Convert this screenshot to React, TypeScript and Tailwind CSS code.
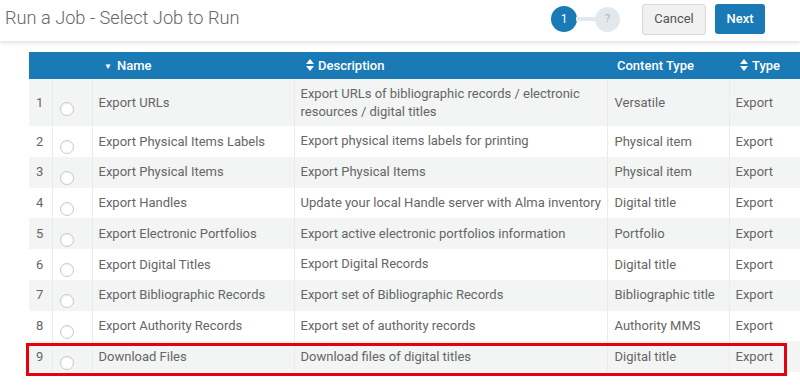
import React from "react";

const rows: [string, string, string][] = [
  ["Export URLs", "Export URLs of bibliographic records / electronic resources / digital titles", "Versatile"],
  ["Export Physical Items Labels", "Export physical items labels for printing", "Physical item"],
  ["Export Physical Items", "Export Physical Items", "Physical item"],
  ["Export Handles", "Update your local Handle server with Alma inventory", "Digital title"],
  ["Export Electronic Portfolios", "Export active electronic portfolios information", "Portfolio"],
  ["Export Digital Titles", "Export Digital Records", "Digital title"],
  ["Export Bibliographic Records", "Export set of Bibliographic Records", "Bibliographic title"],
  ["Export Authority Records", "Export set of authority records", "Authority MMS"],
  ["Download Files", "Download files of digital titles", "Digital title"],
];

function SortIcon() {
  return (
    <svg width="8" height="12" viewBox="0 0 8 12" className="inline-block mr-[4px] -mt-[2px]">
      <path d="M4 0 L8 5 L0 5 Z" fill="white" />
      <path d="M4 12 L8 7 L0 7 Z" fill="white" />
    </svg>
  );
}

export default function App() {
  return (
    <div className="w-[800px] h-[386px] bg-white overflow-hidden text-[#666]" style={{ fontFamily: "Roboto, 'Liberation Sans', sans-serif" }}>
      <div className="h-[41px] flex items-center justify-between pl-[5px] pr-[35px] shadow-[0_2px_4px_rgba(0,0,0,0.12)] relative z-10">
        <div className="text-[18.2px] font-light text-[#666] -mt-[6px]">Run a Job - Select Job to Run</div>
        <div className="flex items-center -mt-[3px]">
          <div className="flex items-center mr-[22px]">
            <div className="w-[26px] h-[26px] rounded-full bg-[#1a7ab5] text-white text-[12px] flex items-center justify-center">1</div>
            <div className="w-[20px] h-[4px] bg-[#e3e8ec] -mx-[1px]" />
            <div className="w-[25px] h-[25px] rounded-full bg-[#e3e8ec] text-[#a9b4bd] text-[11px] flex items-center justify-center">?</div>
          </div>
          <button className="h-[31px] w-[64px] rounded-[3px] border border-[#d8d8d8] bg-[#f1f1f1] text-[#555] text-[13px] mr-[9px]">Cancel</button>
          <button className="h-[30px] w-[50px] rounded-[3px] bg-[#1a7ab5] text-white text-[13px] font-medium">Next</button>
        </div>
      </div>
      <div className="pt-[11px] pl-[29px] relative">
        <table className="table-fixed border-collapse w-[771px] text-[13px]">
          <colgroup>
            <col className="w-[23px]" />
            <col className="w-[40px]" />
            <col className="w-[202px]" />
            <col className="w-[313px]" />
            <col className="w-[122px]" />
            <col />
          </colgroup>
          <thead>
            <tr className="h-[27px] bg-[#1a7ab5] text-white font-medium text-left">
              <th />
              <th />
              <th className="pl-[12px] font-medium">
                <span className="text-[8px] mr-[5px] relative -top-[1px]">▼</span>Name
              </th>
              <th className="pl-[12px] font-medium"><SortIcon />Description</th>
              <th className="pl-[10px] font-medium">Content Type</th>
              <th className="pl-[11px] font-medium"><SortIcon />Type</th>
            </tr>
          </thead>
          <tbody>
            {rows.map((r, i) => (
              <tr key={i} className={(i % 2 === 0 ? "bg-[#f3f4f4] " : "bg-white ") + (i === 0 ? "h-[47px]" : "h-[30.75px]")}>
                <td className="pl-[7px] align-middle text-[#666] border-r border-[#ebebeb]">{i + 1}</td>
                <td className="border-r border-[#ebebeb] align-middle">
                  <div className="relative top-[6px] w-[14px] h-[14px] rounded-full border border-[#c9c9c9] bg-white ml-[7px] shadow-[inset_0_1px_1px_rgba(0,0,0,0.06)]" />
                </td>
                <td className="pl-[6px] border-r border-[#ebebeb] text-[#666] align-middle">{r[0]}</td>
                <td className="pl-[6px] pr-[4px] border-r border-[#ebebeb] text-[#666] align-middle leading-[18px]">{r[1]}</td>
                <td className="pl-[7px] border-r border-[#ebebeb] text-[#666] align-middle">{r[2]}</td>
                <td className="pl-[6px] text-[#666] align-middle">Export</td>
              </tr>
            ))}
          </tbody>
        </table>
        <div className="absolute left-[26px] top-[302px] w-[761px] h-[33px] border-[3px] border-[#e8000b] pointer-events-none" />
      </div>
    </div>
  );
}
